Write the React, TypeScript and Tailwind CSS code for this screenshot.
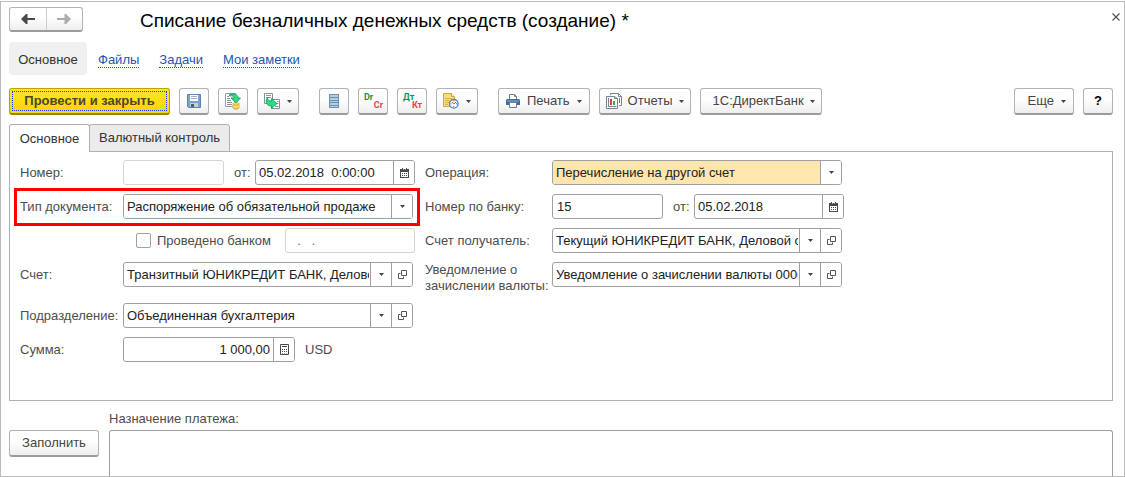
import { useState, type ReactNode } from "react";

const boxBase =
  "flex h-[25px] overflow-hidden rounded-[3px] border bg-white text-[13px] text-[#222222]";
const fieldInput =
  "min-w-0 flex-1 bg-transparent px-[3px] text-[13px] text-[#222222] outline-none";
const lookupInput =
  "min-w-0 flex-1 bg-transparent pr-px pl-[3px] text-[13px] text-[#222222] outline-none";
const fieldButton =
  "flex w-[21px] shrink-0 items-center justify-center border-l border-[#a0a0a0] bg-white hover:bg-[#f2f2f2]";
const toolBase =
  "flex h-[27px] shrink-0 items-center rounded-[3px] border border-b-2 border-[#b3b3b3] border-b-[#9c9c9c] bg-linear-to-b from-white from-40% to-[#eeeeee] text-[13px] text-[#444444]";

function Caret() {
  return (
    <svg width="5" height="3" viewBox="0 0 5 3" aria-hidden="true" className="shrink-0">
      <path d="M0 0h5L2.5 3z" fill="#444" />
    </svg>
  );
}

function OpenIcon() {
  return (
    <svg width="9" height="9" viewBox="0 0 9 9" fill="none" stroke="#555" aria-hidden="true">
      <path d="M3.5 .5h5v5h-5zM2.500 3.500h-2v5h5v-2" />
    </svg>
  );
}

function CalendarIcon() {
  return (
    <svg width="9" height="10" viewBox="0 0 9 10" aria-hidden="true">
      <path d="M0 1h9v9H0z" fill="#4a4a4a" />
      <path d="M2 0h1v2H2zM6 0h1v2H6z" fill="#4a4a4a" />
      <path d="M1 4h7v5H1zM3 1h.5v1H3zM5.500 1H6v1h-.5z" fill="#fff" />
      <path d="M2 5h1v1H2zM4 5h1v1H4zM6 5h1v1H6zM2 7h1v1H2zM4 7h1v1H4zM6 7h1v1H6z" fill="#4a4a4a" />
    </svg>
  );
}

function CalculatorIcon() {
  return (
    <svg width="9" height="11" viewBox="0 0 9 11" aria-hidden="true">
      <path d="M.5 .5h8v10h-8z" fill="#fff" stroke="#4a4a4a" />
      <path d="M2 2h5v1H2zM2 5h1v1H2zM4 5h1v1H4zM6 5h1v1H6zM2 7h1v1H2zM4 7h1v1H4zM6 7h1v1H6zM2 9h1v.5H2zM4 9h1v.5H4zM6 9h1v.5H6z" fill="#4a4a4a" />
    </svg>
  );
}

function ArrowIcon({ back = false }: { back?: boolean }) {
  return (
    <svg width="14" height="10" viewBox="0 0 14 10" aria-hidden="true">
      {back ? (
        <path d="M0 5 5 0h1.500v4H14v2H6.500v4H5z" fill="#4a4a4a" />
      ) : (
        <path d="M14 5 9 0H7.500v4H0v2h7.500v4H9z" fill="#ababab" />
      )}
    </svg>
  );
}

function SaveIcon() {
  return (
    <svg width="14" height="14" viewBox="0 0 14 14" aria-hidden="true">
      <path d="M.5 .5h13v13h-12l-1-1z" fill="#7ba3cf" stroke="#5b84b2" />
      <path d="M3 1h8v6H3z" fill="#fff" />
      <path d="M4 2.500h6M4 4.500h6" stroke="#9fb2c6" />
      <path d="M3 9h8v4H3z" fill="#c5ced8" />
      <path d="M4 10h3v3H4z" fill="#4f5c6c" />
    </svg>
  );
}

function PostIcon() {
  return (
    <svg width="16" height="17" viewBox="0 0 16 17" fill="none" aria-hidden="true">
      <path d="M.5 .5h10v13H.5z" fill="#fff" stroke="#8f9fb0" />
      <path d="M2 3.500h2M2 5.500h3M2 7.500h4M2 9.500h5M2 11.500h5" stroke="#8a949e" />
      <path d="M8 10.500v4c0 2.300 6 2.300 6 0v-4" fill="#f4c645" stroke="#d3a42e" strokeWidth=".8" />
      <ellipse cx="11" cy="10.800" rx="3" ry="1.200" fill="#ffe58a" stroke="#d3a42e" strokeWidth=".7" />
      <path d="M8 12.900c1 1.300 5 1.300 6 0" stroke="#fff0ae" />
      <path d="M4.500 1.500C8.500 -.2 12.800 1 13.200 5h2.300l-4.700 5L6 5h3.200C8.700 3.200 7 2.500 4.500 3z" fill="#2bdc86" stroke="#139553" strokeWidth=".8" />
    </svg>
  );
}

function CreateFromIcon() {
  return (
    <svg width="17" height="17" viewBox="0 0 17 17" fill="none" aria-hidden="true">
      <path d="M.5 .5h8v10h-8z" fill="#fff" stroke="#7f92a6" />
      <path d="M2 2.500h5M2 4.500h5" stroke="#8a949e" />
      <path d="M8.500 6.500h7v9h-8v-3" fill="#fff" stroke="#7f92a6" />
      <path d="M13 8.500h1.500M13 10.500h1.500M11 13.500h3.500" stroke="#8a949e" />
      <path d="M3.500 4.500c0 2.500 1.500 3.800 4 3.500V5.500l5.500 5-5.500 5V13C4 13.500 0 9.500 3.500 4.500z" fill="#2bdc86" stroke="#139553" strokeWidth=".8" />
    </svg>
  );
}

function RegisterIcon() {
  return (
    <svg width="10" height="14" viewBox="0 0 10 14" aria-hidden="true">
      <path d="M0 0h10v14H0z" fill="#6b92b1" />
      <path d="M1 1h8v2H1zM1 4h8v2H1zM1 7h8v1H1zM1 9h8v2H1zM1 12h8v1H1z" fill="#b4cee1" />
    </svg>
  );
}

function PostingsIcon({ debit, credit }: { debit: string; credit: string }) {
  return (
    <svg width="19" height="16" viewBox="0 0 19 16" aria-hidden="true" className="shrink-0 overflow-visible font-[Roboto,sans-serif] text-[9px] font-bold">
      <text x="0" y="7" fill="#0a9449">{debit}</text>
      <text x="19" y="15" textAnchor="end" fill="#e04545">{credit}</text>
    </svg>
  );
}

function ScheduleIcon() {
  return (
    <svg width="16" height="16" viewBox="0 0 16 16" fill="none" aria-hidden="true">
      <path d="M.5 .5h8l3 3v10H.5z" fill="#f7dc86" stroke="#cfa53c" />
      <path d="M8.500 .5v3h3" fill="#fff3c4" stroke="#cfa53c" />
      <path d="M2 5.500h7M2 7.500h4M2 9.500h4M2 11.500h3" stroke="#d9b24e" />
      <circle cx="10.800" cy="10.800" r="4.300" fill="#fff" stroke="#4f85b8" strokeWidth="1.300" />
      <path d="M10.800 7.500v1M10.800 13v1M7.500 10.800h1M13 10.800h1" stroke="#4f6f90" />
      <path d="m9 9 1.800 2 2.200-2" stroke="#e04545" />
    </svg>
  );
}

function PrinterIcon() {
  return (
    <svg width="14" height="14" viewBox="0 0 14 14" fill="none" aria-hidden="true">
      <path d="M3.500 6V.5h5l2 2V6" fill="#fff" stroke="#6d7f92" />
      <path d="M8.500 .5v2h2" stroke="#6d7f92" />
      <path d="M1 5h12l1 1v5H0V6z" fill="#3f6d9c" />
      <path d="M1 7h12" stroke="#86abd0" />
      <path d="M3.500 8.500h7v5h-7z" fill="#fff" stroke="#6d7f92" />
    </svg>
  );
}

function ReportsIcon() {
  return (
    <svg width="16" height="16" viewBox="0 0 16 16" fill="none" aria-hidden="true">
      <path d="M4.500 2V.5h8l3 3v9H13" fill="#fff" stroke="#73869a" />
      <path d="M12.500 .5v3h3" stroke="#73869a" />
      <path d="M13.500 5v5" stroke="#3aae3f" />
      <path d="M.5 3.500h8l3 2v10H.5z" fill="#fff" stroke="#73869a" />
      <path d="M8.500 3.500v2h3" stroke="#73869a" />
      <path d="M2.500 5v8.500h8" stroke="#73869a" />
      <path d="M4 6h2v6H4z" fill="#e23b3b" />
      <path d="M7 8h2v4H7z" fill="#3aae3f" />
    </svg>
  );
}

function IconButton({ label, children, menu = false }: { label: string; children: ReactNode; menu?: boolean }) {
  return (
    <button
      type="button"
      aria-label={label}
      className={`${toolBase} ${menu ? "w-[42px] justify-between px-[6px]" : "w-[30px] justify-center"}`}
    >
      {children}
      {menu && <Caret />}
    </button>
  );
}

function Label({ htmlFor, children, side }: { htmlFor: string; children: ReactNode; side: "left" | "right" }) {
  return (
    <label
      htmlFor={htmlFor}
      className={`shrink-0 pt-[5px] leading-[16px] ${side === "left" ? "w-[103px]" : "w-[127px]"}`}
    >
      {children}
    </label>
  );
}

function LookupField({ id, value }: { id: string; value: string }) {
  return (
    <div className={`${boxBase} w-[290px] border-[#a0a0a0]`}>
      <input id={id} type="text" defaultValue={value} className={lookupInput} />
      <button type="button" aria-label="Выбрать из списка" className={fieldButton}>
        <Caret />
      </button>
      <button type="button" aria-label="Открыть" className={fieldButton}>
        <OpenIcon />
      </button>
    </div>
  );
}

function SelectField({ id, value, highlighted = false }: { id: string; value: string; highlighted?: boolean }) {
  return (
    <div className="grid h-[25px] w-[290px] grid-cols-[1fr_21px] overflow-hidden rounded-[3px] border border-[#a0a0a0] bg-white">
      <select
        id={id}
        className={`col-span-2 col-start-1 row-start-1 appearance-none px-[3px] text-[13px] text-[#222222] outline-none ${
          highlighted ? "bg-[#ffe6ae]" : "bg-white"
        }`}
      >
        <option>{value}</option>
      </select>
      <span className="pointer-events-none col-start-2 row-start-1 flex items-center justify-center border-l border-[#a0a0a0] bg-white">
        <Caret />
      </span>
    </div>
  );
}

function DateField({ id, value, label, className }: { id: string; value: string; label: string; className: string }) {
  return (
    <div className="flex items-start gap-[6px] pl-[10px]">
      <label htmlFor={id} className="w-[15px] pt-[5px] leading-[16px]">{label}</label>
      <div className={`${boxBase} border-[#a0a0a0] ${className}`}>
        <input id={id} type="text" defaultValue={value} className={`${fieldInput} whitespace-pre`} />
        <button type="button" aria-label="Календарь" className={fieldButton}>
          <CalendarIcon />
        </button>
      </div>
    </div>
  );
}

const links = ["Файлы", "Задачи", "Мои заметки"];

export default function App() {
  const [posted, setPosted] = useState(false);

  return (
    <div className="flex min-h-screen flex-col bg-white pt-px font-['Liberation_Sans',Arial,sans-serif] text-[13px] text-[#4d4d4d]">
      <div className="flex flex-1 flex-col border border-[#bbbbbb] pr-[11px] pl-[8px]">
        <header className="flex items-start pt-[5px]">
          <div className="flex h-[25px] w-[74px] shrink-0 rounded-[3px] border border-b-2 border-[#b3b3b3] border-b-[#9c9c9c] bg-linear-to-b from-white from-40% to-[#eeeeee]">
            <button type="button" aria-label="Назад" className="flex flex-1 items-center justify-center">
              <ArrowIcon back />
            </button>
            <button type="button" aria-label="Вперед" className="flex flex-1 items-center justify-center border-l border-[#cccccc]">
              <ArrowIcon />
            </button>
          </div>
          <h1 className="ml-[57px] flex-1 text-[19px] leading-[28px] text-black">
            Списание безналичных денежных средств (создание) *
          </h1>
          <button type="button" aria-label="Закрыть" className="-mr-[10px] flex h-[20px] w-[14px] items-center justify-center">
            <svg width="8" height="8" viewBox="0 0 8 8" stroke="#555" strokeWidth="1.200" aria-hidden="true">
              <path d="m.5 .5 7 7M7.500 .5l-7 7" />
            </svg>
          </button>
        </header>

        <nav className="mt-[7px] flex items-center gap-[20px]">
          <a href="#main" className="-mr-[9px] flex h-[33px] w-[78px] items-center justify-center rounded-[4px] bg-[#f0f0f0] pt-[2px] text-[#333333]">
            Основное
          </a>
          {links.map((text) => (
            <a key={text} href="#section" className="mt-[3px] border-b border-dotted border-[#1c55ae] leading-[14px] text-[#1c55ae]">
              {text}
            </a>
          ))}
        </nav>

        <div className="mt-[13px] flex items-center gap-[9px]">
          <button
            type="button"
            className="flex h-[27px] w-[161px] shrink-0 items-stretch rounded-[3px] border border-b-2 border-[#c2a200] border-b-[#9d8400] bg-linear-to-b from-[#ffe81f] to-[#f7d600] p-[2px] text-[13px] font-bold text-[#4d4530]"
          >
            <span className="flex flex-1 items-center justify-center border border-dotted border-[#2038d8]">
              Провести и закрыть
            </span>
          </button>
          <IconButton label="Записать"><SaveIcon /></IconButton>
          <IconButton label="Провести"><PostIcon /></IconButton>
          <IconButton label="Создать на основании" menu><CreateFromIcon /></IconButton>
          <div className="ml-[11px] flex gap-[9px]">
            <IconButton label="Движения документа"><RegisterIcon /></IconButton>
            <IconButton label="Проводки Dr/Cr"><PostingsIcon debit="Dr" credit="Cr" /></IconButton>
            <IconButton label="Проводки Дт/Кт"><PostingsIcon debit="Дт" credit="Кт" /></IconButton>
            <IconButton label="Задания" menu><ScheduleIcon /></IconButton>
          </div>
          <div className="ml-[11px] flex gap-[9px]">
            <button type="button" className={`${toolBase} gap-[7px] px-[7px]`}>
              <PrinterIcon />
              Печать
              <Caret />
            </button>
            <button type="button" className={`${toolBase} gap-[6px] px-[6px]`}>
              <ReportsIcon />
              Отчеты
              <Caret />
            </button>
            <button type="button" className={`${toolBase} gap-[6px] pr-[6px] pl-[12px]`}>
              1С:ДиректБанк
              <Caret />
            </button>
          </div>
          <div className="ml-auto flex gap-[9px]">
            <button type="button" className={`${toolBase} gap-[7px] pr-[7px] pl-[13px]`}>
              Еще
              <Caret />
            </button>
            <button type="button" aria-label="Справка" className={`${toolBase} w-[30px] justify-center font-bold text-black`}>
              ?
            </button>
          </div>
        </div>

        <div role="tablist" className="mt-[9px] flex">
          <button
            type="button"
            role="tab"
            aria-selected="true"
            className="z-10 -mb-px h-[28px] w-[81px] rounded-t-[3px] border border-b-0 border-[#b0b0b0] bg-white text-[#333333]"
          >
            Основное
          </button>
          <button
            type="button"
            role="tab"
            aria-selected="false"
            className="-mb-px -ml-px h-[28px] w-[141px] rounded-t-[3px] border border-[#b0b0b0] bg-[#ebebeb] text-[#333333]"
          >
            Валютный контроль
          </button>
        </div>

        <section className="border border-[#b0b0b0] pt-[8px] pb-[38px] pl-[10px]">
          <div className="grid grid-cols-[395px_1fr] items-start gap-x-[10px] gap-y-[9px]">
            <div className="flex">
              <Label side="left" htmlFor="number">Номер:</Label>
              <input id="number" type="text" className="h-[25px] w-[101px] rounded-[3px] border border-[#d5d5d5] px-[3px]" />
              <DateField id="date" label="от:" value="05.02.2018  0:00:00" className="w-[160px]" />
            </div>
            <div className="flex">
              <Label side="right" htmlFor="operation">Операция:</Label>
              <SelectField id="operation" value="Перечисление на другой счет" highlighted />
            </div>

            <div className="relative flex">
              <Label side="left" htmlFor="doctype">Тип документа:</Label>
              <SelectField id="doctype" value="Распоряжение об обязательной продаже" />
              <div className="pointer-events-none absolute -top-[6px] -right-[5px] -bottom-[7px] -left-[6px] border-3 border-[#ff0000]" />
            </div>
            <div className="flex">
              <Label side="right" htmlFor="banknumber">Номер по банку:</Label>
              <input id="banknumber" type="text" defaultValue="15" className="h-[25px] w-[111px] rounded-[3px] border border-[#a0a0a0] px-[4px] text-[#222222]" />
              <DateField id="bankdate" label="от:" value="05.02.2018" className="w-[150px]" />
            </div>

            <div className="flex items-center pl-[116px]">
              <input
                id="posted"
                type="checkbox"
                checked={posted}
                onChange={(e) => setPosted(e.target.checked)}
                className="size-[15px] appearance-none rounded-[2px] border border-[#a0a0a0] bg-white checked:bg-[#777777]"
              />
              <label htmlFor="posted" className="w-[134px] pl-[6px]">Проведено банком</label>
              <input
                type="text"
                aria-label="Дата проведения банком"
                defaultValue="  .   ."
                className="h-[25px] w-[130px] rounded-[3px] border border-[#d5d5d5] px-[4px] whitespace-pre text-[#7a6a3a]"
              />
            </div>
            <div className="flex">
              <Label side="right" htmlFor="payee">Счет получатель:</Label>
              <LookupField id="payee" value="Текущий ЮНИКРЕДИТ БАНК, Деловой счет" />
            </div>

            <div className="flex">
              <Label side="left" htmlFor="account">Счет:</Label>
              <LookupField id="account" value="Транзитный ЮНИКРЕДИТ БАНК, Деловой счет" />
            </div>
            <div className="flex">
              <label htmlFor="notice" className="w-[127px] shrink-0 leading-[16px]">
                Уведомление о<br />зачислении валюты:
              </label>
              <LookupField id="notice" value="Уведомление о зачислении валюты 0000-000001" />
            </div>

            <div className="col-span-2 flex">
              <Label side="left" htmlFor="department">Подразделение:</Label>
              <LookupField id="department" value="Объединенная бухгалтерия" />
            </div>

            <div className="col-span-2 flex">
              <Label side="left" htmlFor="amount">Сумма:</Label>
              <div className={`${boxBase} w-[172px] border-[#a0a0a0]`}>
                <input id="amount" type="text" defaultValue="1 000,00" className={`${fieldInput} text-right`} />
                <button type="button" aria-label="Калькулятор" className={fieldButton}>
                  <CalculatorIcon />
                </button>
              </div>
              <span className="pt-[5px] pl-[10px] leading-[16px]">USD</span>
            </div>
          </div>
        </section>

        <div className="flex flex-1 gap-[10px] pt-[10px]">
          <button type="button" className={`${toolBase} mt-[19px] w-[90px] justify-center`}>
            Заполнить
          </button>
          <div className="flex flex-1 flex-col">
            <label htmlFor="purpose" className="h-[19px] leading-[16px]">Назначение платежа:</label>
            <textarea
              id="purpose"
              rows={2}
              className="w-full flex-1 resize-none rounded-t-[3px] border border-b-0 border-[#a0a0a0] px-[4px] py-[3px] text-[#222222] outline-none"
            />
          </div>
        </div>
      </div>
    </div>
  );
}
